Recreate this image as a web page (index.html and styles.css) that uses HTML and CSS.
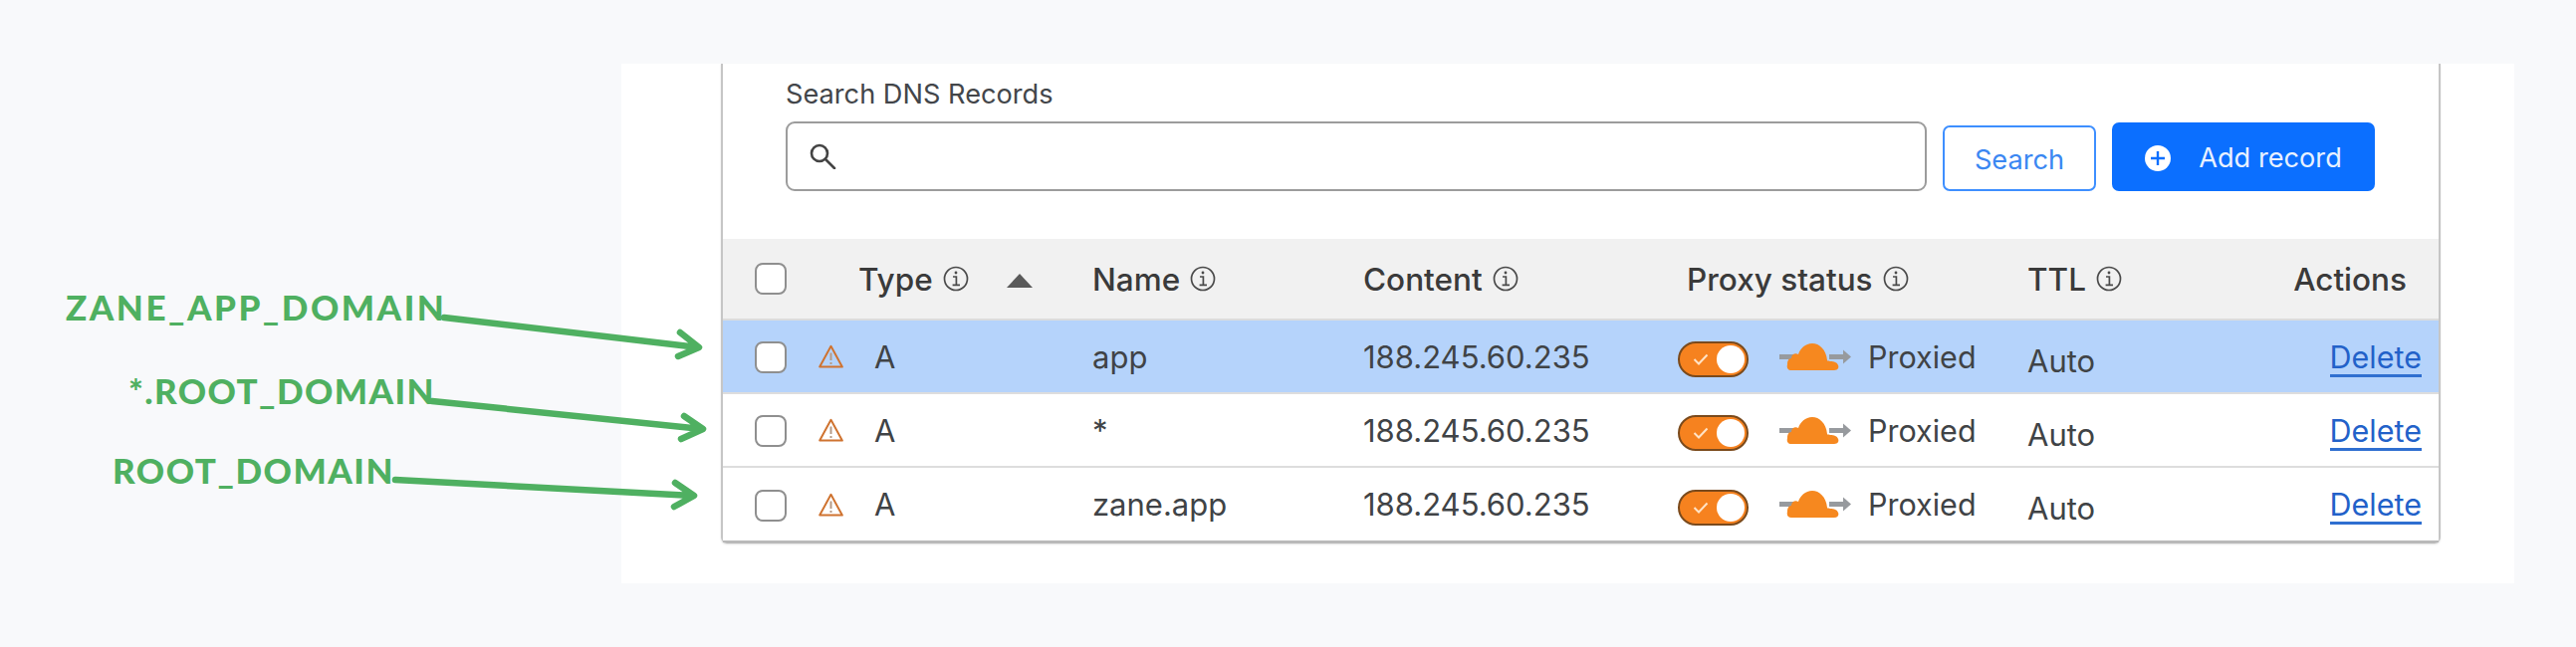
FILE: index.html
```html
<!DOCTYPE html>
<html lang="en">
<head>
<meta charset="utf-8">
<title>DNS Records</title>
<link rel="stylesheet" href="styles.css">
</head>
<body>
<div class="canvas">
  <main class="panel">
    <section class="card">
      <div class="search">
        <label class="search-label">Search DNS Records</label>
        <div class="search-bar">
          <div class="input">
            <svg class="i-search" viewBox="0 0 28 26" fill="none" stroke="#444" stroke-width="2.6" stroke-linecap="round"><circle cx="11" cy="10" r="8"/><path d="M17 16l9 9"/></svg>
          </div>
          <button class="btn btn-outline">Search</button>
          <button class="btn btn-primary">
            <svg class="i-plus" viewBox="0 0 26 26"><circle cx="13" cy="13" r="13" fill="#fff"/><path d="M13 6v14M6 13h14" stroke="#0b6fff" stroke-width="2.4"/></svg>
            <span>Add record</span>
          </button>
        </div>
      </div>
      <div class="row head">
        <div class="c-check"><span class="box"></span></div>
        <div class="c-type-head"><b>Type</b><svg class="info" viewBox="0 0 26 26"><use href="#info"/></svg><span class="caret"></span></div>
        <div class="c-name"><b>Name</b><svg class="info" viewBox="0 0 26 26"><use href="#info"/></svg></div>
        <div class="c-content"><b>Content</b><svg class="info" viewBox="0 0 26 26"><use href="#info"/></svg></div>
        <div class="c-proxy-head"><b>Proxy status</b><svg class="info" viewBox="0 0 26 26"><use href="#info"/></svg></div>
        <div class="c-ttl"><b>TTL</b><svg class="info" viewBox="0 0 26 26"><use href="#info"/></svg></div>
        <div class="c-actions-head"><b>Actions</b></div>
      </div>

      <div class="row rec selected">
        <div class="c-check"><span class="box"></span></div>
        <div class="c-warn"><svg class="warn" viewBox="0 0 25 24"><use href="#warn"/></svg></div>
        <div class="c-type">A</div>
        <div class="c-name">app</div>
        <div class="c-content">188.245.60.235</div>
        <div class="c-proxy"><span class="toggle"><svg class="tick" viewBox="0 0 16 12"><path d="M1.5 6l4.5 4.5L14.5 1.5"/></svg><span class="knob"></span></span><svg class="cloud" viewBox="0 0 72 27"><use href="#cloud"/></svg><span>Proxied</span></div>
        <div class="c-ttl auto">Auto</div>
        <div class="c-actions"><a class="del">Delete</a></div>
      </div>
      <div class="row rec">
        <div class="c-check"><span class="box"></span></div>
        <div class="c-warn"><svg class="warn" viewBox="0 0 25 24"><use href="#warn"/></svg></div>
        <div class="c-type">A</div>
        <div class="c-name">*</div>
        <div class="c-content">188.245.60.235</div>
        <div class="c-proxy"><span class="toggle"><svg class="tick" viewBox="0 0 16 12"><path d="M1.5 6l4.5 4.5L14.5 1.5"/></svg><span class="knob"></span></span><svg class="cloud" viewBox="0 0 72 27"><use href="#cloud"/></svg><span>Proxied</span></div>
        <div class="c-ttl auto">Auto</div>
        <div class="c-actions"><a class="del">Delete</a></div>
      </div>
      <div class="row rec last">
        <div class="c-check"><span class="box"></span></div>
        <div class="c-warn"><svg class="warn" viewBox="0 0 25 24"><use href="#warn"/></svg></div>
        <div class="c-type">A</div>
        <div class="c-name">zane.app</div>
        <div class="c-content">188.245.60.235</div>
        <div class="c-proxy"><span class="toggle"><svg class="tick" viewBox="0 0 16 12"><path d="M1.5 6l4.5 4.5L14.5 1.5"/></svg><span class="knob"></span></span><svg class="cloud" viewBox="0 0 72 27"><use href="#cloud"/></svg><span>Proxied</span></div>
        <div class="c-ttl auto">Auto</div>
        <div class="c-actions"><a class="del">Delete</a></div>
      </div>
    </section>
  </main>

  <span class="note note-1">ZANE_APP_DOMAIN</span>
  <span class="note note-2">*.ROOT_DOMAIN</span>
  <span class="note note-3">ROOT_DOMAIN</span>
  <svg class="arrows" viewBox="0 0 2587 650" fill="none" stroke="#4fb061" stroke-width="6.5" stroke-linecap="round" stroke-linejoin="round">
    <path d="M446 319L701 349M683 334L702 349L681 358"/>
    <path d="M434 403L705 431M687 418L706 431L684 441"/>
    <path d="M397 482L696 498M678 485L697 498L677 509"/>
  </svg>
</div>

<svg class="defs" width="0" height="0">
  <defs>
    <g id="info" fill="none" stroke="#4a4a4a">
      <circle cx="13" cy="13" r="11.5" stroke-width="1.7"/>
      <path d="M10 11h3.4v8M9.6 19.3h7.4" stroke-width="1.7"/>
      <circle cx="13" cy="7" r="1.4" fill="#4a4a4a" stroke="none"/>
    </g>
    <g id="warn" fill="none" stroke="#cf7330">
      <path d="M12.5 1.8L23.8 22.6H1.2Z" stroke-width="2" stroke-linejoin="round"/>
      <path d="M12.5 8.5v7.5" stroke-width="2" stroke="#b59a86"/>
      <path d="M12.5 18v2" stroke-width="2" stroke="#b59a86"/>
    </g>
    <g id="cloud">
      <path d="M0 13.5H14M50 13.5H66" stroke="#979a9e" stroke-width="5" fill="none"/>
      <path d="M64 6.5L72 13.5L64 20.5Z" fill="#979a9e"/>
      <path d="M12 27H55C59 27 60 24 59 22C58 19 55 18 51 18C49 17 48 18 48 17C47 6 40 0 33 0C26 0 21 5 19 11C16 9 12 11 12 15C9 15 8 18 8 21C7 25 9 27 12 27Z" fill="#f6881f"/>
    </g>
  </defs>
</svg>
</body>
</html>
```

FILE: styles.css
```css
* { box-sizing: border-box; }
html, body { margin: 0; padding: 0; }
body {
  background: #f8f9fb;
  font-family: Inter, "Liberation Sans", sans-serif;
  color: #404346;
  overflow: hidden;
}
.canvas { position: relative; width: 2587px; height: 650px; padding: 64px 0 0 624px; }
.panel { width: 1901px; height: 522px; padding-left: 100px; background: #fff; }
.card {
  width: 1727px;
  height: 482px;
  border-left: 2px solid #c6c6c6;
  border-right: 2px solid #c6c6c6;
  border-bottom: 3px solid #b9b9b9;
  border-radius: 0 0 6px 6px;
  box-shadow: 0 1px 2px rgba(0,0,0,.12);
}
.search { height: 176px; padding: 14px 0 0 63px; }
.search-label { display: block; font-size: 27.2px; line-height: 34px; color: #43464a; }
.search-bar { display: flex; align-items: flex-end; margin-top: 10px; }
.input {
  width: 1146px; height: 70px;
  border: 2px solid #9c9c9c; border-radius: 9px;
  display: flex; align-items: center; padding-left: 21px;
}
.i-search { width: 28px; height: 26px; }
.btn { font-family: inherit; font-size: 27.2px; border-radius: 7px; display: flex; align-items: center; justify-content: center; padding: 2px 0 0; }
.btn-outline { width: 154px; height: 66px; margin-left: 16px; background: #fff; border: 2px solid #3e8fff; color: #3b87f2; }
.btn-primary { width: 264px; height: 69px; margin-left: 16px; background: #0b6fff; border: 0; color: #e8f1ff; gap: 28px; }
.i-plus { width: 26px; height: 26px; }

.row {
  display: grid;
  grid-template-columns: 95px 41px 235px 272px 316px 351px 302px 111px;
  align-items: center;
  font-size: 31px;
  color: #404346;
}
.head { height: 82px; background: #f1f1f1; border-bottom: 2px solid #dcdcdc; }
.head b { font-weight: 500; font-size: 31.5px; color: #3a3a3a; }
.rec { height: 74px; border-bottom: 2px solid #dddddd; background: #fff; }
.rec.selected { background: #b5d3fb; }
.rec.last { height: 73px; border-bottom: 0; }
.box { display: block; width: 32px; height: 32px; margin-left: 32px; background: #fff; border: 2px solid #8f8f8f; border-radius: 8px; }
.rec .box { margin-top: 2px; }
.warn { display: block; width: 25px; height: 24px; margin-left: 1px; }
.c-type { padding-left: 16px; }
.c-type-head { grid-column: 2 / 4; padding-left: 41px; display: flex; align-items: center; }
.c-name, .c-content, .c-ttl, .c-proxy-head { display: flex; align-items: center; }
.c-proxy-head { padding-left: 9px; }
.info { width: 26px; height: 26px; margin-left: 10px; }
.caret { width: 0; height: 0; margin-left: 38px; margin-top: 4px; border-left: 13px solid transparent; border-right: 13px solid transparent; border-bottom: 14px solid #5a5a5a; }
.c-proxy { display: flex; align-items: center; font-size: 30.5px; }
.toggle {
  position: relative;
  display: flex; align-items: center; justify-content: space-between;
  width: 71px; height: 36px; margin-top: 6px; padding: 0 2px 0 13px;
  background: #f6821f; border: 2px solid #7a4a1c; border-radius: 18px;
}
.tick { width: 16px; height: 12px; fill: none; stroke: #ffe3c6; stroke-width: 2; }
.knob { display: block; width: 28px; height: 28px; border-radius: 50%; background: #fff; }
.cloud { width: 72px; height: 27px; margin-left: 31px; margin-right: 17px; }
.auto { padding-top: 8px; }
.c-actions { display: flex; justify-content: flex-end; padding-right: 17px; }
.c-actions-head { display: flex; justify-content: flex-end; padding-right: 32px; }
.del { display: block; margin-top: 4px; line-height: 34px; font-size: 30.5px; color: #2261c9; border-bottom: 3px solid #2f6fd0; }

.note {
  position: absolute;
  font-family: Lato, sans-serif;
  font-weight: 900;
  font-size: 35px;
  line-height: 40px;
  color: #4fb061;
  white-space: nowrap;
}
.note-1 { left: 66px; top: 288px; letter-spacing: 2.5px; }
.note-2 { left: 129px; top: 372px; letter-spacing: 1.4px; }
.note-3 { left: 113px; top: 452px; letter-spacing: 1.5px; }
.arrows { position: absolute; left: 0; top: 0; width: 2587px; height: 650px; pointer-events: none; }
.defs { position: absolute; }
```
